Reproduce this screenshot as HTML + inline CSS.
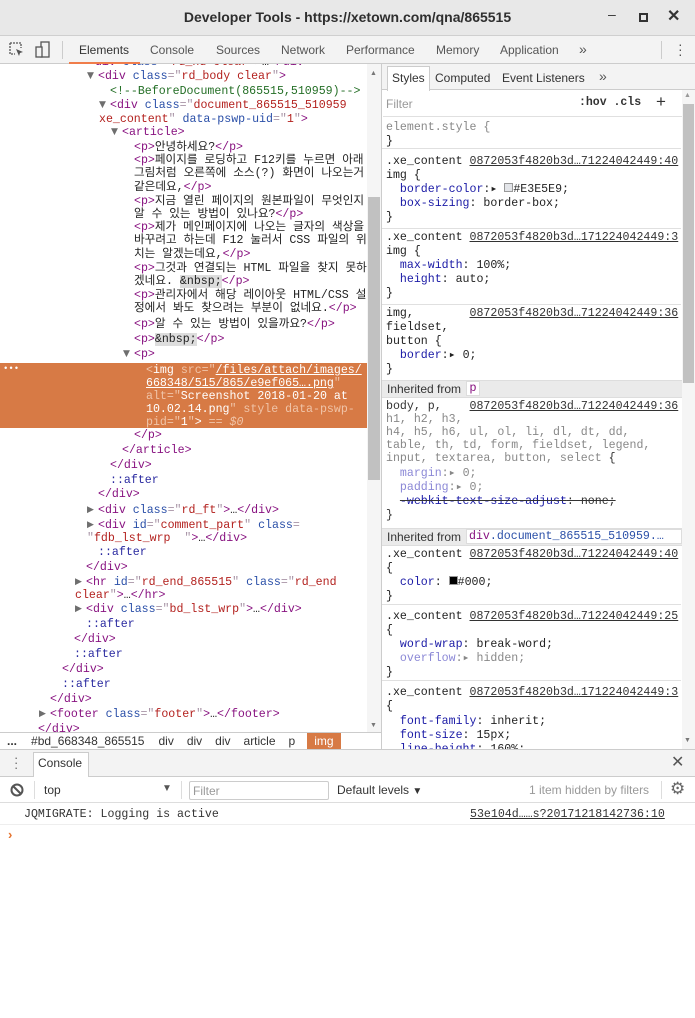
<!DOCTYPE html>
<html><head><meta charset="utf-8"><style>
*{margin:0;padding:0;box-sizing:border-box}
body{width:695px;height:1018px;overflow:hidden;background:#fff;font-family:"Liberation Sans","Noto Sans CJK KR",sans-serif;font-size:12px;color:#333;position:relative}
.a{position:absolute}
.l{position:absolute;white-space:pre;font-family:"Liberation Mono","Noto Sans CJK KR",monospace;font-size:11.6px;line-height:15px;color:#222}
.t{color:#881280}.b{color:#a894a6}.n{color:#2a4fa8}.v{color:#b3211e}.c{color:#236e25}.p{color:#1a1aa6}.g{color:#888}.pi{color:#8b88d6}
.tri{position:absolute;font-size:9px;color:#6e6e6e;font-family:"DejaVu Sans",sans-serif;line-height:15px}
.u{text-decoration:underline;color:#333}
.sep{position:absolute;left:383px;width:299px;height:1px;background:#e0e0e0}
</style></head><body>
<!-- title bar -->
<div class="a" style="left:0;top:0;width:695px;height:36px;background:#e8e8e8;border-bottom:1px solid #cfcfcf"></div>
<div class="a" style="left:0;top:9px;width:695px;text-align:center;font-weight:bold;font-size:14px;color:#2e2e2e">Developer Tools - https://xetown.com/qna/865515</div>
<div class="a" style="left:608px;top:6px;font-size:14px;color:#333">–</div>
<div class="a" style="left:639px;top:13px;width:9px;height:9px;border:2px solid #333"></div>
<div class="a" style="left:667px;top:6px;font-size:16px;color:#333;font-weight:bold">✕</div>
<!-- toolbar -->
<div class="a" style="left:0;top:36px;width:695px;height:28px;background:#f3f3f3;border-bottom:1px solid #ccc"></div>
<svg class="a" style="left:9px;top:42px" width="16" height="16"><path d="M1 1h11v5M1 1v11h5" fill="none" stroke="#555" stroke-width="1.3" stroke-dasharray="2 1"/><path d="M7 7l7 3-3 1-1 3z" fill="#555"/></svg>
<svg class="a" style="left:35px;top:41px" width="16" height="18"><rect x="6" y="1" width="8" height="15" fill="none" stroke="#555" stroke-width="1.3"/><rect x="1" y="6" width="6" height="10" fill="#f3f3f3" stroke="#555" stroke-width="1.3"/></svg>
<div class="a" style="left:62px;top:41px;width:1px;height:18px;background:#ccc"></div>
<div class="a" style="left:69px;top:36px;width:71px;height:28px;border-bottom:2px solid #f07d4b"></div>
<div class="a" style="left:79px;top:43px;color:#333">Elements</div>
<div class="a" style="left:150px;top:43px;color:#555">Console</div>
<div class="a" style="left:216px;top:43px;color:#555">Sources</div>
<div class="a" style="left:281px;top:43px;color:#555">Network</div>
<div class="a" style="left:346px;top:43px;color:#555">Performance</div>
<div class="a" style="left:436px;top:43px;color:#555">Memory</div>
<div class="a" style="left:500px;top:43px;color:#555">Application</div>
<div class="a" style="left:579px;top:41px;color:#555;font-size:14px">»</div>
<div class="a" style="left:661px;top:41px;width:1px;height:18px;background:#ccc"></div>
<div class="a" style="left:678px;top:42px;color:#555;font-size:14px;line-height:5px">·<br>·<br>·</div>

<!-- elements panel -->
<div class="a" style="left:0;top:64px;width:381px;height:668px;overflow:hidden">
<div class="l" style="left:88px;top:-9px"><span class="t">&lt;div </span><span class="n">class</span><span class="b">="</span><span class="v">rd_hd clear</span><span class="b">"</span><span class="t">&gt;</span>…<span class="t">&lt;/div&gt;</span></div>
</div>
<div class="a" style="left:0;top:64px;width:367px;height:668px;overflow:hidden">
<div class="tri" style="left:87px;top:5px">▼</div><div class="l" style="left:98px;top:5px"><span class="t">&lt;div </span><span class="n">class</span><span class="b">="</span><span class="v">rd_body clear</span><span class="b">"</span><span class="t">&gt;</span></div>
<div class="l c" style="left:110px;top:20px">&lt;!--BeforeDocument(865515,510959)--&gt;</div>
<div class="tri" style="left:99px;top:34px">▼</div><div class="l" style="left:110px;top:34px"><span class="t">&lt;div </span><span class="n">class</span><span class="b">="</span><span class="v">document_865515_510959</span></div>
<div class="l" style="left:99px;top:48px"><span class="v">xe_content</span><span class="b">"</span> <span class="n">data-pswp-uid</span><span class="b">="</span><span class="v">1</span><span class="b">"</span><span class="t">&gt;</span></div>
<div class="tri" style="left:111px;top:61px">▼</div><div class="l" style="left:122px;top:61px"><span class="t">&lt;article&gt;</span></div>
<div class="l" style="left:134px;top:76px"><span class="t">&lt;p&gt;</span>안녕하세요?<span class="t">&lt;/p&gt;</span></div>
<div class="l" style="left:134px;top:90px;line-height:13.3px"><span class="t">&lt;p&gt;</span>페이지를 로딩하고 F12키를 누르면 아래
그림처럼 오른쪽에 소스(?) 화면이 나오는거
같은데요,<span class="t">&lt;/p&gt;</span></div>
<div class="l" style="left:134px;top:131px;line-height:13.3px"><span class="t">&lt;p&gt;</span>지금 열린 페이지의 원본파일이 무엇인지
알 수 있는 방법이 있나요?<span class="t">&lt;/p&gt;</span></div>
<div class="l" style="left:134px;top:157px;line-height:13.3px"><span class="t">&lt;p&gt;</span>제가 메인페이지에 나오는 글자의 색상을
바꾸려고 하는데 F12 눌러서 CSS 파일의 위
치는 알겠는데요,<span class="t">&lt;/p&gt;</span></div>
<div class="l" style="left:134px;top:198px;line-height:13.3px"><span class="t">&lt;p&gt;</span>그것과 연결되는 HTML 파일을 찾지 못하
겠네요. <span style="background:#ddd">&amp;nbsp;</span><span class="t">&lt;/p&gt;</span></div>
<div class="l" style="left:134px;top:225px;line-height:13.3px"><span class="t">&lt;p&gt;</span>관리자에서 해당 레이아웃 HTML/CSS 설
정에서 봐도 찾으려는 부분이 없네요.<span class="t">&lt;/p&gt;</span></div>
<div class="l" style="left:134px;top:253px"><span class="t">&lt;p&gt;</span>알 수 있는 방법이 있을까요?<span class="t">&lt;/p&gt;</span></div>
<div class="l" style="left:134px;top:268px"><span class="t">&lt;p&gt;</span><span style="background:#ddd">&amp;nbsp;</span><span class="t">&lt;/p&gt;</span></div>
<div class="tri" style="left:123px;top:283px">▼</div><div class="l" style="left:134px;top:283px"><span class="t">&lt;p&gt;</span></div>
<div class="a" style="left:0;top:299px;width:367px;height:65px;background:#d77a45"></div>
<div class="l" style="left:3px;top:298px;color:#fff;font-size:9px">•••</div>
<div class="l" style="left:146px;top:300px;line-height:13px;color:#fff"><span style="color:#f0c4a8">&lt;</span>img <span style="color:#f0c4a8">src="</span><u>/files/attach/images/</u>
<u>668348/515/865/e9ef065….png</u><span style="color:#f0c4a8">"</span>
<span style="color:#f0c4a8">alt="</span>Screenshot 2018-01-20 at
10.02.14.png<span style="color:#f0c4a8">" style data-pswp-</span>
<span style="color:#f0c4a8">pid="</span>1<span style="color:#f0c4a8">"</span>&gt; <span style="color:#f0c4a8">== <i>$0</i></span></div>
<div class="l" style="left:134px;top:364px"><span class="t">&lt;/p&gt;</span></div>
<div class="l" style="left:122px;top:379px"><span class="t">&lt;/article&gt;</span></div>
<div class="l" style="left:110px;top:394px"><span class="t">&lt;/div&gt;</span></div>
<div class="l" style="left:110px;top:409px;color:#2a2aa0">::after</div>
<div class="l" style="left:98px;top:423px"><span class="t">&lt;/div&gt;</span></div>
<div class="tri" style="left:87px;top:439px">▶</div><div class="l" style="left:98px;top:439px"><span class="t">&lt;div </span><span class="n">class</span><span class="b">="</span><span class="v">rd_ft</span><span class="b">"</span><span class="t">&gt;</span>…<span class="t">&lt;/div&gt;</span></div>
<div class="tri" style="left:87px;top:454px">▶</div><div class="l" style="left:98px;top:454px"><span class="t">&lt;div </span><span class="n">id</span><span class="b">="</span><span class="v">comment_part</span><span class="b">"</span> <span class="n">class</span><span class="b">=</span></div>
<div class="l" style="left:87px;top:467px"><span class="b">"</span><span class="v">fdb_lst_wrp  </span><span class="b">"</span><span class="t">&gt;</span>…<span class="t">&lt;/div&gt;</span></div>
<div class="l" style="left:98px;top:481px;color:#2a2aa0">::after</div>
<div class="l" style="left:86px;top:496px"><span class="t">&lt;/div&gt;</span></div>
<div class="tri" style="left:75px;top:511px">▶</div><div class="l" style="left:86px;top:511px"><span class="t">&lt;hr </span><span class="n">id</span><span class="b">="</span><span class="v">rd_end_865515</span><span class="b">"</span> <span class="n">class</span><span class="b">="</span><span class="v">rd_end</span></div>
<div class="l" style="left:75px;top:524px"><span class="v">clear</span><span class="b">"</span><span class="t">&gt;</span>…<span class="t">&lt;/hr&gt;</span></div>
<div class="tri" style="left:75px;top:538px">▶</div><div class="l" style="left:86px;top:538px"><span class="t">&lt;div </span><span class="n">class</span><span class="b">="</span><span class="v">bd_lst_wrp</span><span class="b">"</span><span class="t">&gt;</span>…<span class="t">&lt;/div&gt;</span></div>
<div class="l" style="left:86px;top:553px;color:#2a2aa0">::after</div>
<div class="l" style="left:74px;top:568px"><span class="t">&lt;/div&gt;</span></div>
<div class="l" style="left:74px;top:583px;color:#2a2aa0">::after</div>
<div class="l" style="left:62px;top:598px"><span class="t">&lt;/div&gt;</span></div>
<div class="l" style="left:62px;top:613px;color:#2a2aa0">::after</div>
<div class="l" style="left:50px;top:628px"><span class="t">&lt;/div&gt;</span></div>
<div class="tri" style="left:39px;top:643px">▶</div><div class="l" style="left:50px;top:643px"><span class="t">&lt;footer </span><span class="n">class</span><span class="b">="</span><span class="v">footer</span><span class="b">"</span><span class="t">&gt;</span>…<span class="t">&lt;/footer&gt;</span></div>
<div class="l" style="left:38px;top:658px"><span class="t">&lt;/div&gt;</span></div>
</div>
<!-- elements scrollbar -->
<div class="a" style="left:367px;top:64px;width:14px;height:668px;background:#f5f5f5"></div>
<div class="a" style="left:368px;top:197px;width:12px;height:283px;background:#c1c1c1"></div>
<div class="a" style="left:370px;top:70px;font-size:7px;color:#777">▲</div>
<div class="a" style="left:370px;top:722px;font-size:7px;color:#777">▼</div>
<div class="a" style="left:381px;top:64px;width:1px;height:685px;background:#ccc"></div>

<!-- breadcrumb -->
<div class="a" style="left:0;top:732px;width:381px;height:17px;background:#fff;border-top:1px solid #ccc"></div>
<div class="a" style="left:0;top:733px;height:16px;font-size:12px;line-height:16px;white-space:pre;color:#333"><span style="padding-left:7px;font-weight:bold">...</span><span style="padding-left:14px">#bd_668348_865515</span><span style="padding-left:14px">div</span><span style="padding-left:13px">div</span><span style="padding-left:13px">div</span><span style="padding-left:13px">article</span><span style="padding-left:13px">p</span><span style="margin-left:12px;background:#d77a45;color:#fff;padding:0 7px;display:inline-block">img</span></div>

<!-- styles panel -->
<div class="a" style="left:382px;top:64px;width:313px;height:26px;background:#f3f3f3;border-bottom:1px solid #ccc"></div>
<div class="a" style="left:387px;top:66px;width:43px;height:25px;background:#fff;border:1px solid #ccc;border-bottom:none"></div>
<div class="a" style="left:392px;top:71px;color:#333">Styles</div>
<div class="a" style="left:435px;top:71px;color:#333">Computed</div>
<div class="a" style="left:502px;top:71px;color:#333">Event Listeners</div>
<div class="a" style="left:599px;top:68px;color:#555;font-size:14px">»</div>
<div class="a" style="left:386px;top:97px;color:#999">Filter</div>
<div class="a" style="left:579px;top:96px;font-family:'Liberation Mono',monospace;font-weight:bold;font-size:11.5px;color:#333">:hov .cls</div>
<div class="a" style="left:656px;top:92px;font-size:17px;color:#333">+</div>
<div class="sep" style="top:116px"></div>
<div class="a" style="left:382px;top:90px;width:300px;height:659px;overflow:hidden">
<div class="l g" style="left:4px;top:30px">element.style {</div>
<div class="l" style="left:4px;top:44px">}</div>
<div class="sep" style="left:0;top:58px"></div>
<div class="l" style="left:4px;top:65px;line-height:14px">.xe_content <span class="u">0872053f4820b3d…71224042449:40</span>
img {
  <span class="p">border-color</span>:▸ <span style="display:inline-block;width:9px;height:9px;background:#e3e5e9;border:1px solid #999"></span>#E3E5E9;
  <span class="p">box-sizing</span>: border-box;
}</div>
<div class="sep" style="left:0;top:138px"></div>
<div class="l" style="left:4px;top:141px;line-height:14px">.xe_content <span class="u">0872053f4820b3d…171224042449:3</span>
img {
  <span class="p">max-width</span>: 100%;
  <span class="p">height</span>: auto;
}</div>
<div class="sep" style="left:0;top:214px"></div>
<div class="l" style="left:4px;top:217px;line-height:14px">img,        <span class="u">0872053f4820b3d…71224042449:36</span>
fieldset,
button {
  <span class="p">border</span>:▸ 0;
}</div>
<div class="a" style="left:0;top:290px;width:300px;height:18px;background:#eaeaea;border-top:1px solid #ddd;border-bottom:1px solid #ddd"></div>
<div class="a" style="left:5px;top:292px;color:#333">Inherited from</div>
<div class="a" style="left:84px;top:291px;width:14px;height:15px;background:#fff;border:1px solid #ddd;color:#881280;font-family:'Liberation Mono',monospace;text-align:center;line-height:13px">p</div>
<div class="l g" style="left:4px;top:310px;line-height:13px"><span style="color:#333">body, p,</span>    <span class="u">0872053f4820b3d…71224042449:36</span>
h1, h2, h3,
h4, h5, h6, ul, ol, li, dl, dt, dd,
table, th, td, form, fieldset, legend,
input, textarea, button, select <span style="color:#333">{</span></div>
<div class="l g" style="left:4px;top:377px;line-height:14px">  <span class="pi">margin</span>:▸ 0;
  <span class="pi">padding</span>:▸ 0;
  <span style="text-decoration:line-through;color:#333"><span class="p">-webkit-text-size-adjust</span>: none;</span>
<span style="color:#333">}</span></div>
<div class="a" style="left:0;top:438px;width:300px;height:18px;background:#eaeaea;border-top:1px solid #ddd;border-bottom:1px solid #ddd"></div>
<div class="a" style="left:5px;top:440px;color:#333">Inherited from</div>
<div class="a" style="left:84px;top:439px;width:216px;height:15px;background:#fff;border:1px solid #ddd;font-family:'Liberation Mono',monospace;font-size:11.6px;line-height:13px;white-space:pre;padding-left:2px"><span class="t">div</span><span class="n">.document_865515_510959.…</span></div>
<div class="l" style="left:4px;top:458px;line-height:14px">.xe_content <span class="u">0872053f4820b3d…71224042449:40</span>
{
  <span class="p">color</span>: <span style="display:inline-block;width:9px;height:9px;background:#000;border:1px solid #999"></span>#000;
}</div>
<div class="sep" style="left:0;top:514px"></div>
<div class="l" style="left:4px;top:520px;line-height:14px">.xe_content <span class="u">0872053f4820b3d…71224042449:25</span>
{
  <span class="p">word-wrap</span>: break-word;
  <span class="pi">overflow</span><span class="g">:▸ hidden;</span>
}</div>
<div class="sep" style="left:0;top:590px"></div>
<div class="l" style="left:4px;top:596px;line-height:14.3px">.xe_content <span class="u">0872053f4820b3d…171224042449:3</span>
{
  <span class="p">font-family</span>: inherit;
  <span class="p">font-size</span>: 15px;
  <span class="p">line-height</span>: 160%;</div>
</div>
<div class="a" style="left:682px;top:90px;width:13px;height:659px;background:#f5f5f5"></div>
<div class="a" style="left:683px;top:104px;width:11px;height:279px;background:#c1c1c1"></div>
<div class="a" style="left:684px;top:92px;font-size:7px;color:#999">▲</div>
<div class="a" style="left:684px;top:737px;font-size:7px;color:#777">▼</div>

<!-- drawer -->
<div class="a" style="left:0;top:749px;width:695px;height:28px;background:#f3f3f3;border-top:1px solid #ccc;border-bottom:1px solid #ccc"></div>
<div class="a" style="left:14px;top:755px;color:#666;font-size:13px;line-height:5px">·<br>·<br>·</div>
<div class="a" style="left:33px;top:752px;width:56px;height:25px;background:#fff;border:1px solid #ccc;border-bottom:none"></div>
<div class="a" style="left:38px;top:756px;color:#333">Console</div>
<div class="a" style="left:671px;top:752px;font-size:16px;color:#555">✕</div>
<div class="a" style="left:0;top:777px;width:695px;height:26px;border-bottom:1px solid #ddd;background:#fff"></div>
<svg class="a" style="left:10px;top:783px" width="14" height="14"><circle cx="7" cy="7" r="5.5" fill="none" stroke="#555" stroke-width="2"/><path d="M3 3l8 8" stroke="#555" stroke-width="2"/></svg>
<div class="a" style="left:34px;top:781px;width:1px;height:18px;background:#ddd"></div>
<div class="a" style="left:44px;top:783px;color:#333">top</div>
<div class="a" style="left:162px;top:783px;font-size:10px;color:#555">▼</div>
<div class="a" style="left:181px;top:781px;width:1px;height:18px;background:#ddd"></div>
<div class="a" style="left:189px;top:781px;width:140px;height:19px;border:1px solid #ccc;border-radius:2px;padding:2px 3px;color:#999">Filter</div>
<div class="a" style="left:337px;top:783px;color:#333">Default levels <span style="font-size:10px">▼</span></div>
<div class="a" style="left:529px;top:783px;color:#999">1 item hidden by filters</div>
<div class="a" style="left:661px;top:781px;width:1px;height:18px;background:#ddd"></div>
<div class="a" style="left:670px;top:779px;font-size:17px;color:#666">⚙</div>
<div class="l" style="left:24px;top:807px;color:#333">JQMIGRATE: Logging is active</div>
<div class="l u" style="left:470px;top:807px">53e104d……s?20171218142736:10</div>
<div class="a" style="left:0;top:824px;width:695px;height:1px;background:#eee"></div>
<div class="a" style="left:8px;top:827px;color:#e5732f;font-size:13px;font-weight:bold">›</div>
</body></html>
